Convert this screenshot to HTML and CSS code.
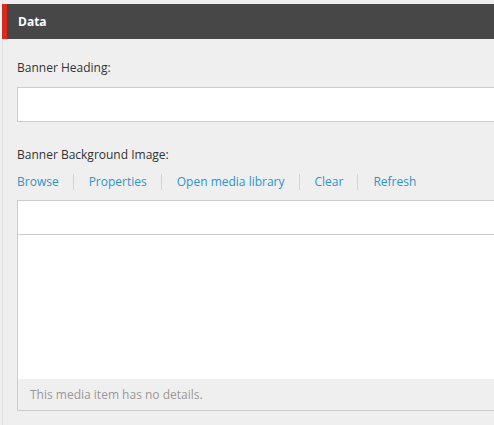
FILE: index.html
```html
<!DOCTYPE html>
<html>
<head>
<meta charset="utf-8">
<link rel="stylesheet" href="styles.css">
</head>
<body>
<div class="page">
  <div class="section-head">Data</div>
  <div class="section-body">
    <div class="field">
      <label class="label">Banner Heading:</label>
      <div class="input"></div>
    </div>
    <div class="field">
      <label class="label">Banner Background Image:</label>
      <div class="links">
        <a class="link">Browse</a>
        <a class="link">Properties</a>
        <a class="link">Open media library</a>
        <a class="link">Clear</a>
        <a class="link">Refresh</a>
      </div>
      <div class="media">
        <div class="media-path"></div>
        <div class="media-preview"></div>
        <div class="media-details">This media item has no details.</div>
      </div>
    </div>
  </div>
</div>
</body>
</html>
```

FILE: styles.css
```css
html, body {
  margin: 0;
  padding: 0;
  background: #efefef;
}
body {
  font-family: "Open Sans", "Segoe UI", sans-serif;
  font-size: 12px;
  color: #333;
  overflow: hidden;
  height: 425px;
}
.page {
  margin-left: 2px;
  border-left: 1px solid #e2e2e2;
  padding-top: 4px;
  height: 421px;
}
.section-head {
  height: 35px;
  background: #474747;
  border-left: 5px solid #dc291e;
  margin-left: -1px;
  color: #fff;
  font-weight: bold;
  font-size: 12px;
  line-height: 35px;
  padding-left: 11px;
}
.section-body {
  padding: 21px 0 0 14px;
}
.field {
  display: flex;
  flex-direction: column;
}
.label {
  line-height: 16px;
  height: 16px;
  color: #333;
}
.input {
  margin-top: 11px;
  height: 33px;
  background: #fff;
  border: 1px solid #ccc;
  border-right: none;
  margin-bottom: 25px;
}
.links {
  display: flex;
  margin-top: 11px;
  height: 16px;
  align-items: center;
}
.link {
  color: #2b96cc;
  padding: 0 14px 0 15px;
  line-height: 16px;
  border-left: 1px solid #d4d4d4;
}
.link:first-child {
  padding-left: 0;
  border-left: none;
}
.media {
  margin-top: 10px;
  border: 1px solid #ccc;
  border-right: none;
  display: flex;
  flex-direction: column;
}
.media-path {
  height: 33px;
  background: #fff;
  border-bottom: 1px solid #ccc;
}
.media-preview {
  height: 144px;
  background: #fff;
}
.media-details {
  height: 31px;
  line-height: 31px;
  padding-left: 12px;
  color: #999;
  background: #efefef;
}
```
